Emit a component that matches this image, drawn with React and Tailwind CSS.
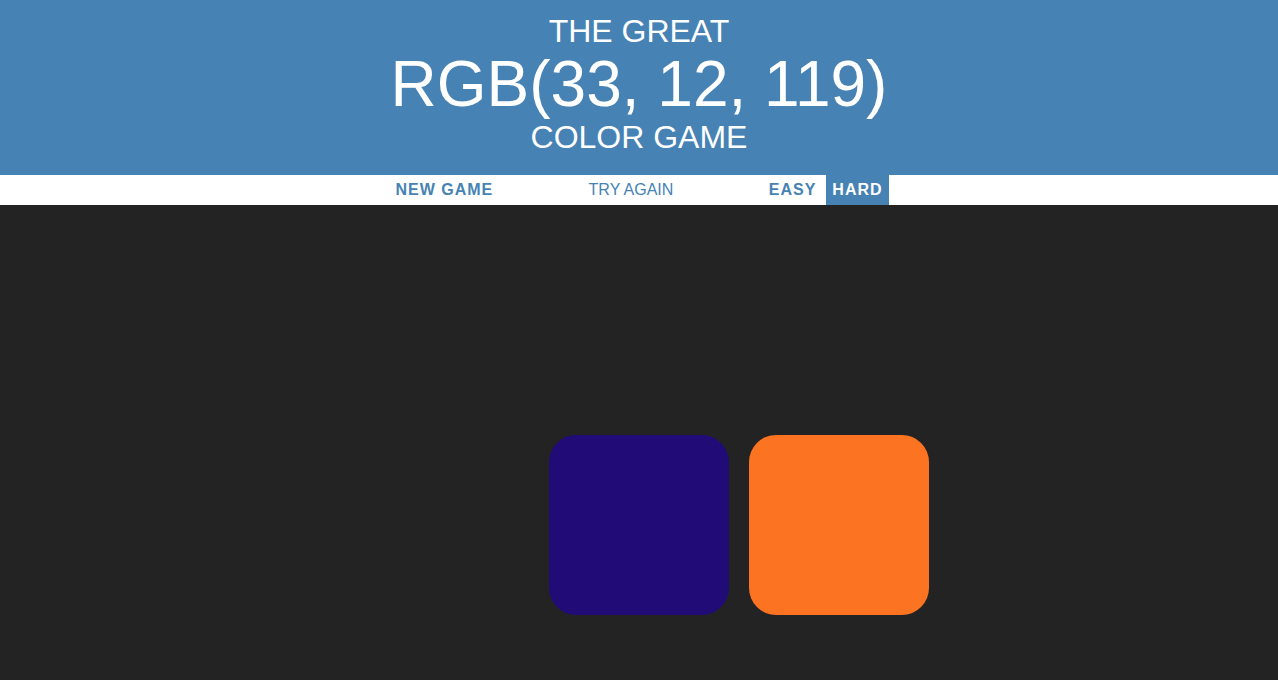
import React, { useState } from 'react';

const squares = [
  { color: '#232323' },
  { color: '#232323' },
  { color: '#232323' },
  { color: '#232323' },
  { color: '#210c77' },
  { color: '#fc7322' },
];

export default function App() {
  const [hard, setHard] = useState(true);

  return (
    <div className="min-h-screen bg-[#232323] font-['Liberation_Sans',Arial,sans-serif]">
      {/* Title */}
      <h1 className="bg-[#4682b4] pt-[14px] pb-[20px] text-center text-white uppercase font-normal text-[32px] leading-[1.1]">
        The Great
        <br />
        <span className="text-[64px]">RGB(33, 12, 119)</span>
        <br />
        Color Game
      </h1>

      {/* Stripe */}
      <div className="flex h-[30px] items-stretch justify-center gap-[4px] bg-white text-[16px]">
        <button className="px-[6px] font-bold uppercase tracking-[1px] text-[#4682b4]">
          New Game
        </button>
        <span className="flex w-[20%] items-center justify-center uppercase text-[#4682b4]">
          Try Again
        </span>
        <button
          onClick={() => setHard(false)}
          className={`px-[6px] font-bold uppercase tracking-[1px] ${!hard ? 'bg-[#4682b4] text-white' : 'text-[#4682b4]'}`}
        >
          Easy
        </button>
        <button
          onClick={() => setHard(true)}
          className={`px-[6px] font-bold uppercase tracking-[1px] ${hard ? 'bg-[#4682b4] text-white' : 'text-[#4682b4]'}`}
        >
          Hard
        </button>
      </div>

      {/* Squares */}
      <div className="mx-auto mt-[20px] flex max-w-[600px] flex-wrap">
        {squares.map((sq, i) => (
          <div
            key={i}
            className="m-[1.66%] aspect-square w-[30%] rounded-[15%]"
            style={{ backgroundColor: sq.color }}
          />
        ))}
      </div>
    </div>
  );
}
